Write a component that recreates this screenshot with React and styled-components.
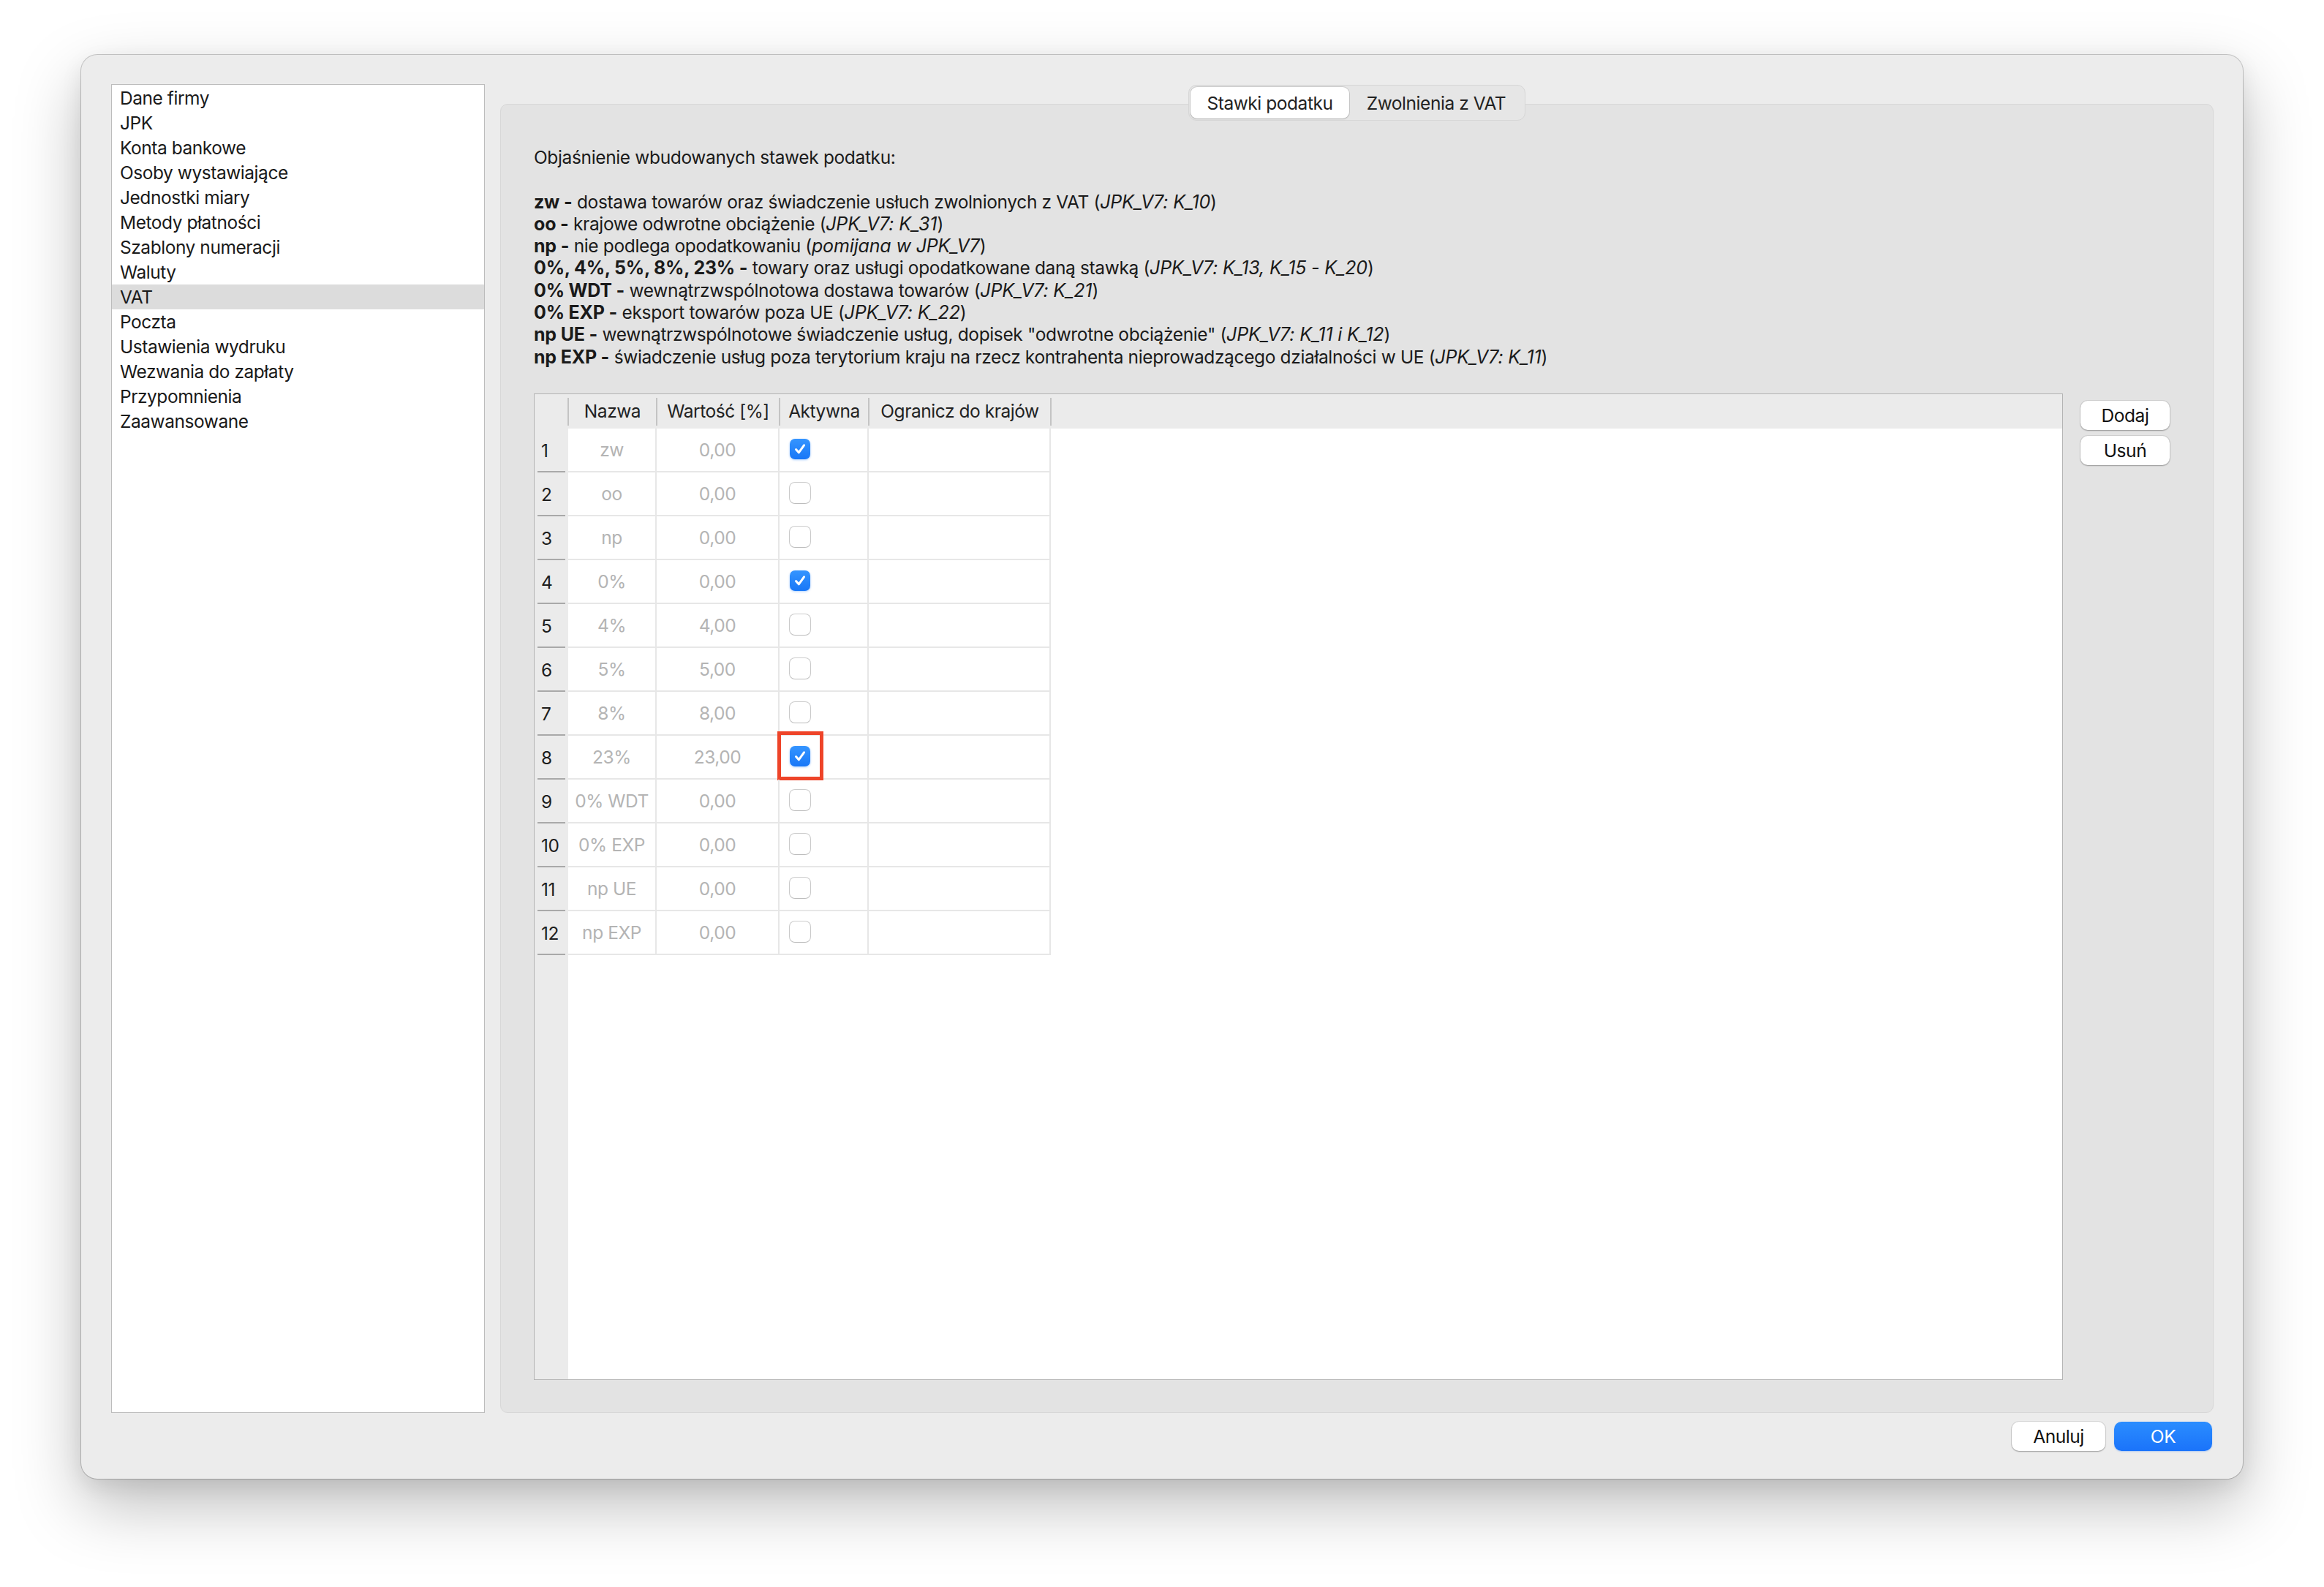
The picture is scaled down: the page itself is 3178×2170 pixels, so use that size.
import styled, { createGlobalStyle } from 'styled-components';

const GlobalStyle = createGlobalStyle`
  html, body {
    margin: 0;
    padding: 0;
    background: #ffffff;
  }
  body {
    font-family: Inter, "Liberation Sans", "Noto Sans", sans-serif;
    font-size: 24.5px;
    letter-spacing: -0.45px;
    color: #1d1d1d;
  }
  * {
    box-sizing: border-box;
  }
`;

const Page = styled.div`
  width: 3178px;
  height: 2170px;
  padding: 75px 0 0 111px;
  overflow: hidden;
`;

const Window = styled.div`
  width: 2956px;
  height: 1947px;
  display: flex;
  flex-direction: column;
  padding: 40px 40px 38px 41px;
  background: #ececec;
  border-radius: 22px;
  box-shadow:
    0 0 0 1px rgba(0, 0, 0, 0.2),
    0 36px 90px rgba(0, 0, 0, 0.26),
    0 10px 30px rgba(0, 0, 0, 0.08);
`;

const Main = styled.div`
  flex: 1;
  display: flex;
  gap: 21px;
  min-height: 0;
`;

const Sidebar = styled.ul`
  width: 511px;
  margin: 0;
  padding: 1px 0 0;
  list-style: none;
  background: #ffffff;
  border: 1px solid #bcbcbc;
`;

const SidebarItem = styled.li`
  height: 34px;
  padding-left: 11px;
  line-height: 34px;
  color: #1a1a1a;
  background: ${(p) => (p.$selected ? '#dcdcdc' : 'transparent')};
`;

const Content = styled.div`
  flex: 1;
  display: flex;
  flex-direction: column;
  padding-top: 1px;
`;

const TabBar = styled.div`
  align-self: center;
  display: flex;
  height: 49px;
  padding: 2px;
  margin-bottom: -23px;
  position: relative;
  z-index: 1;
  background: #e6e6e6;
  border: 1px solid #d6d6d6;
  border-radius: 11px;
`;

const Tab = styled.div`
  display: flex;
  align-items: center;
  justify-content: center;
  width: ${(p) => p.$width}px;
  color: #222;
  border-radius: 9px;
  background: ${(p) => (p.$active ? '#ffffff' : 'transparent')};
  box-shadow: ${(p) =>
    p.$active ? '0 0 0 1px rgba(0,0,0,0.1), 0 1px 2px rgba(0,0,0,0.15)' : 'none'};
`;

const Panel = styled.div`
  flex: 1;
  display: flex;
  flex-direction: column;
  padding: 57px 59px 44px 45px;
  background: #e3e3e3;
  border: 1px solid #d7d7d7;
  border-radius: 10px;
`;

const Explanation = styled.div`
  line-height: 30.3px;
  letter-spacing: -0.36px;
  color: #1a1a1a;
  white-space: nowrap;
`;

const Line = styled.div`
  min-height: 30.3px;
`;

const Key = styled.b`
  font-size: 25px;
  font-weight: 700;
  letter-spacing: -0.2px;
`;

const Ref = styled.i`
  font-size: 25px;
  font-style: italic;
  letter-spacing: -0.15px;
`;

const TableRow = styled.div`
  flex: 1;
  display: flex;
  gap: 24px;
  margin-top: 35px;
  min-height: 0;
`;

const Table = styled.div`
  flex: 1;
  display: flex;
  flex-direction: column;
  background: #ffffff;
  border: 1px solid #b3b3b3;
`;

const columns = '46px 121px 168px 122px 249px 1fr';

const HeaderRow = styled.div`
  display: grid;
  grid-template-columns: ${columns};
  height: 47px;
  background: #ebebeb;
`;

const HeaderCell = styled.div`
  position: relative;
  display: flex;
  align-items: center;
  justify-content: center;
  color: #222;

  &::after {
    content: ${(p) => (p.$noLine ? 'none' : "''")};
    position: absolute;
    right: -1px;
    top: 5px;
    width: 2px;
    height: 38px;
    background: #c4c4c4;
  }
`;

const DataRow = styled.div`
  display: grid;
  grid-template-columns: ${columns};
  height: 60px;
`;

const RowNumber = styled.div`
  position: relative;
  display: flex;
  align-items: center;
  padding-left: 9px;
  color: #1d1d1d;
  background: #ebebeb;

  &::after {
    content: '';
    position: absolute;
    left: 4px;
    right: 4px;
    bottom: 0;
    height: 2px;
    background: #a9a9a9;
  }
`;

const Cell = styled.div`
  position: relative;
  display: flex;
  align-items: center;
  justify-content: ${(p) => (p.$left ? 'flex-start' : 'center')};
  padding-left: ${(p) => (p.$left ? '14px' : '0')};
  color: #b4b4b4;
  border-right: 2px solid #e7e7e7;
  border-bottom: 2px solid #e7e7e7;
`;

const Filler = styled.div`
  flex: 1;
  display: grid;
  grid-template-columns: ${columns};
`;

const Gutter = styled.div`
  background: #ebebeb;
`;

const Checkbox = styled.div`
  width: 28px;
  height: 28px;
  margin-top: -1px;
  display: flex;
  align-items: center;
  justify-content: center;
  border-radius: 7px;
  background: ${(p) =>
    p.$checked ? 'linear-gradient(#3595ff, #1877f7)' : '#ffffff'};
  box-shadow: ${(p) =>
    p.$checked
      ? '0 1px 3px rgba(24, 119, 247, 0.35)'
      : '0 0 0 1px rgba(0,0,0,0.2), 0 1px 1px rgba(0,0,0,0.08)'};
`;

const Highlight = styled.div`
  position: absolute;
  left: -3px;
  top: -6px;
  width: 63px;
  height: 67px;
  border: 5px solid #ee4429;
`;

const SideButtons = styled.div`
  width: 122px;
  display: flex;
  flex-direction: column;
  gap: 8px;
  padding-top: 10px;
`;

const Button = styled.button`
  width: ${(p) => p.$width || 122}px;
  height: 40px;
  padding: 0;
  font-family: inherit;
  font-size: 24.5px;
  letter-spacing: -0.45px;
  color: ${(p) => (p.$primary ? '#ffffff' : '#111')};
  border: none;
  border-radius: 10px;
  background: ${(p) =>
    p.$primary ? 'linear-gradient(#2b8dff, #1a73fa)' : '#ffffff'};
  box-shadow: ${(p) =>
    p.$primary
      ? '0 1px 2px rgba(26, 115, 250, 0.3)'
      : '0 0 0 1px rgba(0,0,0,0.08), 0 1px 2px rgba(0,0,0,0.28)'};
`;

const Footer = styled.div`
  display: flex;
  justify-content: flex-end;
  gap: 12px;
  padding-top: 12px;
  padding-right: 2px;
`;

const menu = [
  'Dane firmy',
  'JPK',
  'Konta bankowe',
  'Osoby wystawiające',
  'Jednostki miary',
  'Metody płatności',
  'Szablony numeracji',
  'Waluty',
  'VAT',
  'Poczta',
  'Ustawienia wydruku',
  'Wezwania do zapłaty',
  'Przypomnienia',
  'Zaawansowane',
];

const explanations = [
  ['zw -', ' dostawa towarów oraz świadczenie usłuch zwolnionych z VAT (', 'JPK_V7: K_10'],
  ['oo -', ' krajowe odwrotne obciążenie (', 'JPK_V7: K_31'],
  ['np -', ' nie podlega opodatkowaniu (', 'pomijana w JPK_V7'],
  ['0%, 4%, 5%, 8%, 23% -', ' towary oraz usługi opodatkowane daną stawką (', 'JPK_V7: K_13, K_15 - K_20'],
  ['0% WDT -', ' wewnątrzwspólnotowa dostawa towarów (', 'JPK_V7: K_21'],
  ['0% EXP -', ' eksport towarów poza UE (', 'JPK_V7: K_22'],
  ['np UE -', ' wewnątrzwspólnotowe świadczenie usług, dopisek "odwrotne obciążenie" (', 'JPK_V7: K_11 i K_12'],
  ['np EXP -', ' świadczenie usług poza terytorium kraju na rzecz kontrahenta nieprowadzącego działalności w UE (', 'JPK_V7: K_11'],
];

const rates = [
  { name: 'zw', value: '0,00', active: true },
  { name: 'oo', value: '0,00' },
  { name: 'np', value: '0,00' },
  { name: '0%', value: '0,00', active: true },
  { name: '4%', value: '4,00' },
  { name: '5%', value: '5,00' },
  { name: '8%', value: '8,00' },
  { name: '23%', value: '23,00', active: true, marked: true },
  { name: '0% WDT', value: '0,00' },
  { name: '0% EXP', value: '0,00' },
  { name: 'np UE', value: '0,00' },
  { name: 'np EXP', value: '0,00' },
];

function Check() {
  return (
    <svg width="18" height="18" viewBox="0 0 18 18">
      <path
        d="M3.5 9.5 L7.3 13.8 L14.5 3.8"
        fill="none"
        stroke="#ffffff"
        strokeWidth="3"
        strokeLinecap="round"
        strokeLinejoin="round"
      />
    </svg>
  );
}

export default function App() {
  return (
    <>
      <GlobalStyle />
      <Page>
        <Window>
          <Main>
            <Sidebar>
              {menu.map((item) => (
                <SidebarItem key={item} $selected={item === 'VAT'}>
                  {item}
                </SidebarItem>
              ))}
            </Sidebar>
            <Content>
              <TabBar>
                <Tab $active $width={217}>Stawki podatku</Tab>
                <Tab $width={238}>Zwolnienia z VAT</Tab>
              </TabBar>
              <Panel>
                <Explanation>
                  <Line>Objaśnienie wbudowanych stawek podatku:</Line>
                  <Line />
                  {explanations.map(([key, text, ref]) => (
                    <Line key={key}>
                      <Key>{key}</Key>
                      {text}
                      <Ref>{ref}</Ref>)
                    </Line>
                  ))}
                </Explanation>
                <TableRow>
                  <Table>
                    <HeaderRow>
                      <HeaderCell />
                      <HeaderCell>Nazwa</HeaderCell>
                      <HeaderCell>Wartość [%]</HeaderCell>
                      <HeaderCell>Aktywna</HeaderCell>
                      <HeaderCell>Ogranicz do krajów</HeaderCell>
                      <HeaderCell $noLine />
                    </HeaderRow>
                    {rates.map((rate, i) => (
                      <DataRow key={rate.name}>
                        <RowNumber>{i + 1}</RowNumber>
                        <Cell>{rate.name}</Cell>
                        <Cell>{rate.value}</Cell>
                        <Cell $left>
                          <Checkbox $checked={rate.active}>
                            {rate.active && <Check />}
                          </Checkbox>
                          {rate.marked && <Highlight />}
                        </Cell>
                        <Cell />
                        <div />
                      </DataRow>
                    ))}
                    <Filler>
                      <Gutter />
                    </Filler>
                  </Table>
                  <SideButtons>
                    <Button>Dodaj</Button>
                    <Button>Usuń</Button>
                  </SideButtons>
                </TableRow>
              </Panel>
            </Content>
          </Main>
          <Footer>
            <Button $width={128}>Anuluj</Button>
            <Button $primary $width={134}>OK</Button>
          </Footer>
        </Window>
      </Page>
    </>
  );
}
